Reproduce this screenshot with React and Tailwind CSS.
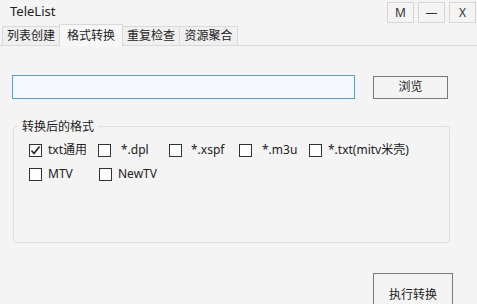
import React, { useState } from "react";

const tabs = [
  { label: "列表创建", w: "w-[58px]" },
  { label: "格式转换", w: "w-[64px]" },
  { label: "重复检查", w: "w-[58px]" },
  { label: "资源聚合", w: "w-[59px]" },
];

const formats = [
  [
    { label: "txt通用", checked: true, w: "w-[69px]" },
    { label: "*.dpl", w: "w-[71px]", gap: "ml-[10px]" },
    { label: "*.xspf", w: "w-[70px]", gap: "ml-[9px]" },
    { label: "*.m3u", w: "w-[70px]", gap: "ml-[10px]" },
    { label: "*.txt(mitv米壳)", w: "" },
  ],
  [
    { label: "MTV", w: "w-[70px]" },
    { label: "NewTV", w: "" },
  ],
];

const CheckItem = ({ label, checked, w, gap = "ml-[6px]" }) => (
  <label className={`flex items-center ${w}`}>
    <span className="w-[13px] h-[13px] border border-[#333] bg-white flex items-center justify-center">
      {checked && (
        <svg width="11" height="11" viewBox="0 0 11 11">
          <path d="M1.5 5.5 L4 8.5 L9.5 1.5" fill="none" stroke="#222" strokeWidth="1.6" />
        </svg>
      )}
    </span>
    <span className={`${gap} text-[12px] text-[#222]`}>{label}</span>
  </label>
);

const App = () => {
  const [active, setActive] = useState(1);
  const [path, setPath] = useState("");

  return (
    <div
      className="w-[477px] h-[304px] bg-[#f4f4f4] overflow-hidden text-[#1a1a1a]"
      style={{ fontFamily: '"Noto Sans", "Noto Sans CJK SC", sans-serif' }}
    >
      {/* Title bar */}
      <div className="h-[24px] flex items-start justify-between">
        <div className="pl-[10px] pt-[2px] text-[13px] text-[#222]">TeleList</div>
        <div className="flex gap-[4px] pt-[2px] pr-[1px]">
          {["M", "—", "X"].map((b) => (
            <button
              key={b}
              className="w-[27px] h-[21px] border border-[#d6d6d6] bg-[#f4f4f4] text-[12px] text-[#333] flex items-center justify-center"
            >
              {b}
            </button>
          ))}
        </div>
      </div>

      {/* Tabs */}
      <div className="h-[22px] flex items-end pl-[2px] border-b border-[#d9d9d9]">
        {tabs.map((t, i) => (
          <button
            key={t.label}
            onClick={() => setActive(i)}
            className={
              i === active
                ? `${t.w} h-[22px] -mb-px -ml-px bg-[#f7f7f7] border border-b-0 border-[#d9d9d9] text-[12px] text-[#222] leading-[20px]`
                : `${t.w} h-[19px] -ml-px first:ml-0 bg-[#f0f0f0] border border-b-0 border-[#d9d9d9] text-[12px] text-[#222] leading-[18px]`
            }
          >
            {t.label}
          </button>
        ))}
      </div>

      {/* Content */}
      <div className="pl-[12px] pt-[29px]">
        <div className="flex items-center">
          <div className="w-[343px] h-[24px] border border-[#4a9fe8] bg-[#f6f8fd] flex items-center px-[2px]">
            <input
              value={path}
              onChange={(e) => setPath(e.target.value)}
              className="w-full h-full bg-transparent outline-none text-[12px]"
            />
          </div>
          <button className="ml-[18px] w-[75px] h-[23px] border border-[#7a7a7a] bg-[#f4f4f4] text-[12px] text-[#222]">
            浏览
          </button>
        </div>

        <div className="relative mt-[27px] ml-[1px] w-[437px] h-[117px] border border-[#d8e0e5] rounded-[3px]">
          <span className="absolute -top-[9px] left-[4px] px-[4px] bg-[#f4f4f4] text-[12px] text-[#222]">
            转换后的格式
          </span>
          <div className="pt-[16px] pl-[15px] flex flex-col gap-[10px]">
            {formats.map((row, r) => (
              <div key={r} className="flex items-center h-[14px]">
                {row.map((f) => (
                  <CheckItem key={f.label} {...f} />
                ))}
              </div>
            ))}
          </div>
        </div>

        <div className="flex justify-end pr-[24px] mt-[30px]">
          <button className="w-[80px] h-[40px] border border-[#7a7a7a] bg-[#f4f4f4] text-[12px] text-[#222] pt-[4px]">
            执行转换
          </button>
        </div>
      </div>
    </div>
  );
};

export default App;
